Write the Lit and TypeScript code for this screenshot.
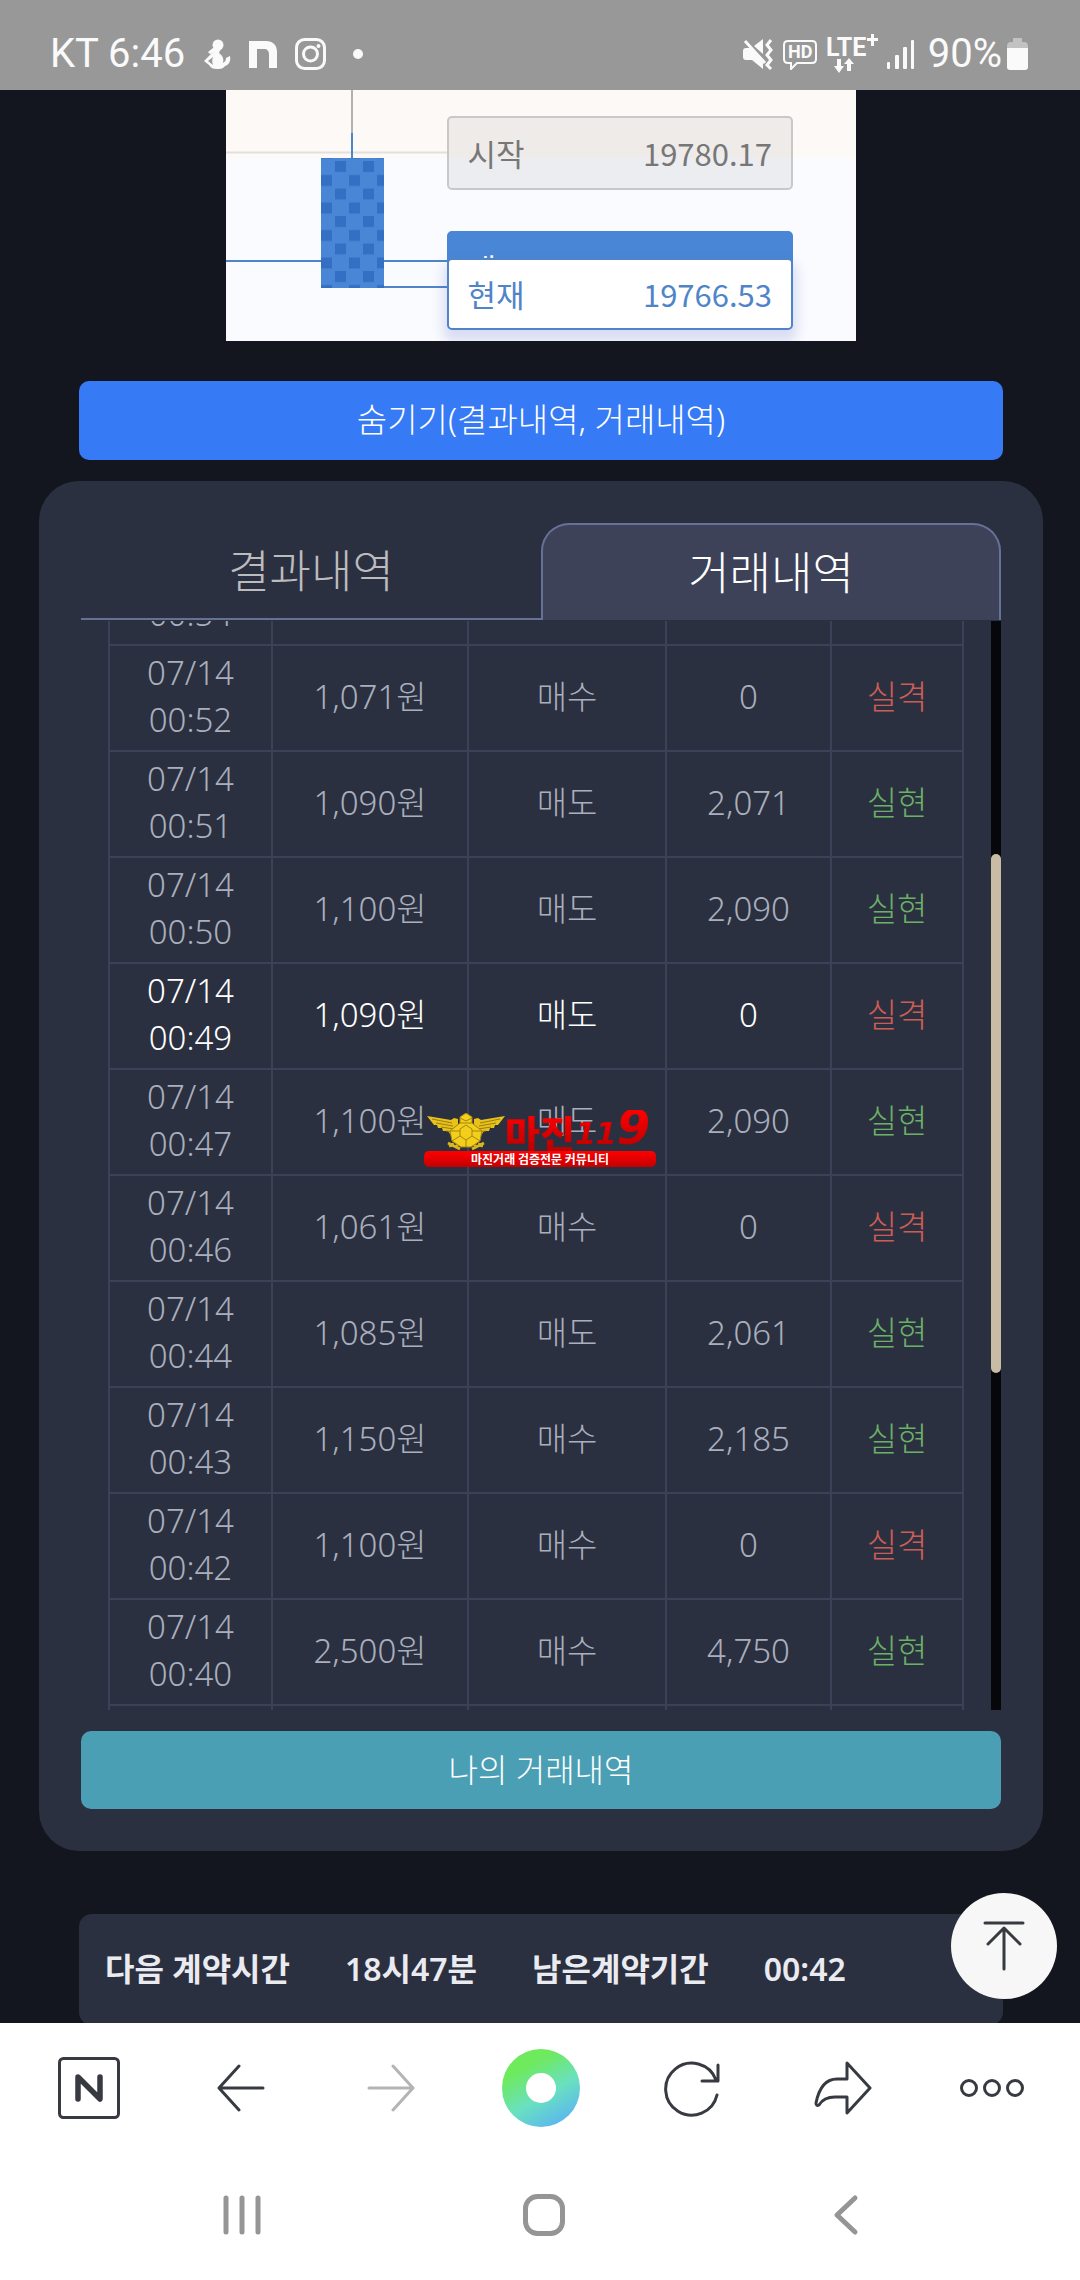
import { LitElement, html, css, svg } from "lit";
import { customElement, state } from "lit/decorators.js";
import { classMap } from "lit/directives/class-map.js";

interface Trade {
  time: string;
  amount?: string;
  side?: string;
  payout?: string;
  win?: boolean;
  strong?: boolean;
}

const TRADES: Trade[] = [
  { time: "00:54" },
  { time: "00:52", amount: "1,071원", side: "매수", payout: "0", win: false },
  { time: "00:51", amount: "1,090원", side: "매도", payout: "2,071", win: true },
  { time: "00:50", amount: "1,100원", side: "매도", payout: "2,090", win: true },
  { time: "00:49", amount: "1,090원", side: "매도", payout: "0", win: false, strong: true },
  { time: "00:47", amount: "1,100원", side: "매도", payout: "2,090", win: true },
  { time: "00:46", amount: "1,061원", side: "매수", payout: "0", win: false },
  { time: "00:44", amount: "1,085원", side: "매도", payout: "2,061", win: true },
  { time: "00:43", amount: "1,150원", side: "매수", payout: "2,185", win: true },
  { time: "00:42", amount: "1,100원", side: "매수", payout: "0", win: false },
  { time: "00:40", amount: "2,500원", side: "매수", payout: "4,750", win: true },
];

@customElement("status-bar")
export class StatusBar extends LitElement {
  static styles = css`
    :host { display: block; }
    .bar {
      display: flex;
      justify-content: space-between;
      align-items: center;
      height: 90px;
      padding: 18px 51px 0 50px;
      box-sizing: border-box;
      background: #989898;
      color: #fafafa;
      font: 400 40px/44px Roboto, "Noto Sans", sans-serif;
    }
    .side { display: flex; align-items: center; }
    .left svg { margin-left: 18px; }
    .right { gap: 8px; }
    svg { display: block; fill: #fafafa; }
    .hd { font: 700 18px Roboto, sans-serif; }
    .lte { font: 700 25px Roboto, sans-serif; }
    .line { fill: none; stroke: #fafafa; }
    .level { display: flex; align-items: center; gap: 5px; padding-left: 4px; }
  `;

  render() {
    return html`
      <div class="bar">
        <div class="side left">
          <span>KT 6:46</span>
          <svg width="28" height="32" viewBox="0 0 28 32">
            <circle cx="15" cy="7" r="5.5" />
            <path d="M12 10h6l-2 5c4 3 5 6 4 10 2-1 3-3 3-5l4-2c1 5-1 9-5 10-2 3-5 3-8 3-4 0-6-1-8-4L1 23l8-8 3-1-5 2-2-2 5-4zM5 23l5 4c-1-3-1-5 0-8z" fill-rule="evenodd" />
          </svg>
          <svg width="28" height="32" viewBox="0 0 28 32">
            <path d="M0 3h17c7 0 11 4 11 11v16h-8V16c0-3-2-5-5-5H8v19H0z" />
          </svg>
          <svg width="32" height="32" viewBox="0 0 32 32">
            <g class="line" stroke-width="3">
              <rect x="1.5" y="1.5" width="28" height="29" rx="8" />
              <circle cx="15.500" cy="16" r="7" />
            </g>
            <circle cx="23.500" cy="8" r="2" />
          </svg>
          <svg width="36" height="32" viewBox="0 0 36 32"><circle cx="13" cy="16" r="5" /></svg>
        </div>
        <div class="side right">
          <svg width="32" height="32" viewBox="0 0 32 32">
            <path d="M1 13q0-3 3-3h5L21 22v9L10 22H4q-3 0-3-3zM12 8l9-7v15z" />
            <path class="line" d="M3 3l20 22M29 2l-4 5 4 5-4 5 4 5-4 5 4 4" stroke-width="3" />
          </svg>
          <svg width="36" height="32" viewBox="0 0 36 32">
            <path class="line" d="M6 3h24q4 0 4 4v14q0 4-4 4H15l-6 6v-6H6q-4 0-4-4V7q0-4 4-4z" stroke-width="2" />
            <text class="hd" x="6" y="20">HD</text>
          </svg>
          <svg width="52" height="40" viewBox="0 0 52 40">
            <text class="lte" x="0" y="22">LTE</text>
            <path d="M45 0h3v4h4v3h-4v5h-3V7h-4V4h4z" />
            <path d="M11 25h4v7h3l-5 7-5-7h3zM21 37h4v-7h3l-5-6-5 6h3z" />
          </svg>
          <svg width="30" height="32" viewBox="0 0 30 32">
            <rect x="1" y="24" width="3" height="7" rx="1" />
            <rect x="9" y="17" width="4" height="14" rx="1" />
            <rect x="17" y="9" width="4" height="22" rx="1" />
            <rect x="25" y="2" width="3" height="29" rx="1" />
          </svg>
          <span class="level">
            <span>90%</span>
            <svg width="22" height="34" viewBox="0 0 22 34">
              <path d="M6 1h9v4h2q4 0 4 4v3H0V9q0-4 4-4h2z" fill="#c2c2c2" />
              <path d="M0 11h21v19q0 3-3 3H3q-3 0-3-3z" />
            </svg>
          </span>
        </div>
      </div>
    `;
  }
}

@customElement("price-chart")
export class PriceChart extends LitElement {
  static styles = css`
    :host { display: block; }
    .chart {
      position: relative;
      height: 251px;
      overflow: hidden;
      background: linear-gradient(#fdf9f7 68px, #fafbff 68px);
      font: 400 31px/42px "Noto Sans CJK KR", sans-serif;
    }
    svg { display: block; width: 100%; height: 251px; }
    .tag {
      position: absolute;
      left: 35%;
      right: 10%;
      box-sizing: border-box;
      display: flex;
      justify-content: space-between;
      align-items: center;
      height: 74px;
      padding: 0 19px;
      border: 2px solid #c8c8c8;
      border-radius: 5px;
      color: #777;
    }
    .open { top: 26px; background: rgba(80, 75, 75, 0.08); }
    .sell { top: 141px; background: #4a86d6; border-color: #4a86d6; color: #fff; }
    .now {
      top: 168px;
      height: 72px;
      background: #fff;
      border-color: #4f85c8;
      color: #4f85c8;
      box-shadow: 0 8px 12px 4px rgba(90, 105, 190, 0.2);
    }
  `;

  render() {
    return html`
      <div class="chart">
        <svg viewBox="0 0 630 251" preserveAspectRatio="none" role="img" aria-label="19766.53">
          <defs>
            <pattern id="weave" x="95" y="71" width="28" height="27.500" patternUnits="userSpaceOnUse">
              <rect width="28" height="28" fill="#4a86d6" />
              <rect x="14" y="0" width="11" height="11" fill="#356fc4" />
              <rect x="0" y="14" width="11" height="11" fill="#356fc4" />
            </pattern>
          </defs>
          <path d="M0 62.500H221" stroke="#e2dfde" stroke-width="2" />
          <path d="M126 0V43" stroke="#b3b1b0" stroke-width="2" />
          <path d="M126 43V69" stroke="#4a86c8" stroke-width="2" />
          <path d="M0 171H221M158 197H221" stroke="#4f85c8" stroke-width="2" />
          <rect x="95" y="68" width="63" height="130" fill="#4a86d6" />
          <rect x="95" y="68" width="63" height="130" fill="url(#weave)" />
        </svg>
        <div class="tag open"><span>시작</span><span>19780.17</span></div>
        <div class="tag sell"><span>매도</span></div>
        <div class="tag now"><span>현재</span><span>19766.53</span></div>
      </div>
    `;
  }
}

@customElement("trade-table")
export class TradeTable extends LitElement {
  static styles = css`
    :host { display: flex; min-height: 0; }
    .view { flex: 1; overflow: hidden; padding: 0 27px; }
    table {
      width: 100%;
      margin-top: -83px;
      border-collapse: collapse;
      table-layout: fixed;
      color: #a9afbc;
      font: 300 33px/47px "Noto Sans", "Noto Sans CJK KR", sans-serif;
    }
    .date { width: 163px; }
    .amount { width: 196px; }
    .side { width: 198px; }
    .payout { width: 165px; }
    td {
      height: 94px;
      padding: 3px 0 7px;
      border: 2px solid #3c4158;
      text-align: center;
    }
    .strong { color: #fff; }
    .win { color: #6ab066; }
    .lose { color: #cc5d54; }
    .track { width: 10px; background: #05070b; display: grid; grid-template-rows: 233fr 519fr 337fr; }
    .thumb { grid-row: 2; border-radius: 5px; background: #c8bca5; }
  `;

  render() {
    return html`
      <div class="view">
        <table>
          <colgroup>
            <col class="date" /><col class="amount" /><col class="side" /><col class="payout" /><col />
          </colgroup>
          <tbody>
            ${TRADES.map(
              (t) => html`
                <tr class=${classMap({ strong: !!t.strong })}>
                  <td>07/14<br />${t.time}</td>
                  <td>${t.amount}</td>
                  <td>${t.side}</td>
                  <td>${t.payout}</td>
                  <td class=${t.win ? "win" : "lose"}>
                    ${t.win === undefined ? "" : t.win ? "실현" : "실격"}
                  </td>
                </tr>
              `
            )}
            <tr><td></td><td></td><td></td><td></td><td></td></tr>
          </tbody>
        </table>
      </div>
      <div class="track"><div class="thumb"></div></div>
    `;
  }
}

@customElement("brand-mark")
export class BrandMark extends LitElement {
  static styles = css`
    :host { display: block; width: 232px; }
    .top { display: flex; align-items: flex-end; height: 38px; padding-left: 3px; white-space: nowrap; }
    svg { display: block; flex: none; }
    .name, .num {
      flex: none;
      color: transparent;
      background: linear-gradient(#ff0000, #b80000);
      -webkit-background-clip: text;
      background-clip: text;
    }
    .name { font: 900 38px/38px "Noto Sans CJK KR", sans-serif; }
    .num { font: italic 700 30px/34px "DejaVu Sans", sans-serif; padding-right: 6px; }
    .nine { font-size: 48px; }
    .strip {
      height: 16px;
      border-radius: 5px;
      background: linear-gradient(#ff0000, #c40000);
      color: #fff;
      text-align: center;
      font: 700 12px/16px "Noto Sans CJK KR", sans-serif;
    }
  `;

  render() {
    const wing = svg`
      <path d="M0 3L24 7l3-2 4 1v14l-8 1-2-3h-5l-1-3h-4l-1-3H7z" fill="#e8c21a" />
      <path d="M5 6l20 4M9 10l17 3M14 14l13 2M19 18l10 1" fill="none" stroke="#9a7d10" />`;
    return html`
      <div class="top">
        <svg width="78" height="38" viewBox="0 0 78 38">
          ${wing}
          <g transform="translate(78 0) scale(-1 1)">${wing}</g>
          <path d="M21 30l12 6M57 30l-12 6M22 33l5-2M56 33l-5-2M28 34l6-4M50 34l-6-4" stroke="#d9b51c" stroke-width="3" />
          <path d="M33 4l6-4 6 4v6l10 8-2 10-9 6H34l-9-6-2-10 10-8z" fill="#f3cf1b" stroke="#a38512" />
          <path d="M39 12l6 4v7l-6 4-6-4v-7zM33 5l6 3 6-3M33 10h12M23 18l10 0M55 18H45M25 28l8-5M53 28l-8-5M39 27v7" fill="none" stroke="#a38512" />
        </svg>
        <span class="name">마진</span><span class="num">11<span class="nine">9</span></span>
      </div>
      <div class="strip">마진거래 검증전문 커뮤니티</div>
    `;
  }
}

@customElement("app-root")
export class AppRoot extends LitElement {
  @state() private tab = 1;

  static styles = css`
    :host { display: block; }
    .app {
      position: relative;
      display: flex;
      flex-direction: column;
      height: 100vh;
      background: #13161e;
      font: 300 32px/47px "Noto Sans", "Noto Sans CJK KR", sans-serif;
    }
    button {
      border: 0;
      margin: 0;
      padding: 0;
      background: none;
      color: #fff;
      font: inherit;
      cursor: pointer;
    }
    svg { display: block; }
    main {
      flex: 1;
      min-height: 0;
      overflow: hidden;
      display: flex;
      flex-direction: column;
      padding: 0 37px 0 39px;
    }
    .chart { margin: 0 187px; flex: none; }
    .wide { flex: none; height: 79px; border-radius: 10px; padding-bottom: 2px; }
    .hide { margin: 40px 40px 21px; background: #367af6; font-size: 33px; }
    .panel {
      flex: 1;
      min-height: 0;
      display: flex;
      flex-direction: column;
      padding: 42px;
      border-radius: 40px;
      background: #2b3040;
    }
    .tabs { display: grid; grid-template-columns: 1fr 1fr; height: 97px; margin-bottom: 1px; flex: none; }
    .tab {
      font-size: 45px;
      line-height: 60px;
      color: #bcbcbe;
      border-bottom: 2px solid #667196;
    }
    .tab.active {
      color: #fff;
      background: #3d4259;
      border: 2px solid #667196;
      border-bottom: 0;
      border-radius: 28px 28px 0 0;
    }
    .list { flex: 1; }
    .mine { height: 78px; margin-top: 21px; background: #4b9fb5; }
    .next {
      flex: none;
      display: flex;
      gap: 55px;
      margin: 63px 40px -2px;
      padding: 31px 26px 33px;
      border-radius: 13px;
      background: #2b3040;
      color: #eaebf0;
      font-weight: 600;
    }
    .fab {
      position: absolute;
      right: 23px;
      bottom: 281px;
      width: 106px;
      height: 106px;
      border-radius: 50%;
      background: #f7f7f7;
    }
    .mark { position: absolute; top: 50%; left: 50%; transform: translate(-50%, -50%); }
    .tools {
      flex: none;
      display: grid;
      grid-template-columns: repeat(7, 1fr);
      height: 132px;
      box-sizing: border-box;
      padding: 0 12px 3px 14px;
      background: #fff;
    }
    .system {
      flex: none;
      display: grid;
      grid-template-columns: repeat(3, 1fr);
      height: 125px;
      padding: 0 83px 5px 91px;
      box-sizing: border-box;
      background: #fff;
    }
    .tools button, .system button { display: grid; place-items: center; }
    .ink { fill: none; stroke: #373a40; stroke-width: 3; stroke-linecap: round; stroke-linejoin: round; }
    .dim { stroke: #b4b4b4; }
    .sys { fill: none; stroke: #959595; stroke-width: 5; stroke-linecap: round; stroke-linejoin: round; }
    .ring { width: 78px; height: 78px; border-radius: 50%; background: linear-gradient(150deg, #6eea5c 25%, #6ae0c0 58%, #5bb8ee 88%); display: grid; place-items: center; }
    .hole { width: 30px; height: 30px; border-radius: 50%; background: #fff; }
  `;

  render() {
    return html`
      <div class="app">
        <status-bar></status-bar>
        <main>
          <price-chart class="chart"></price-chart>
          <button class="wide hide">숨기기(결과내역, 거래내역)</button>
          <section class="panel">
            <div class="tabs" role="tablist">
              ${["결과내역", "거래내역"].map(
                (label, i) => html`
                  <button
                    role="tab"
                    aria-selected=${this.tab === i}
                    class=${classMap({ tab: true, active: this.tab === i })}
                    @click=${() => (this.tab = i)}
                  >${label}</button>
                `
              )}
            </div>
            <trade-table class="list"></trade-table>
            <button class="wide mine">나의 거래내역</button>
          </section>
          <section class="next">
            <span>다음 계약시간</span><span>18시47분</span><span>남은계약기간</span><span>00:42</span>
          </section>
        </main>
        <nav class="tools">
          <button aria-label="N">
            <svg class="ink" width="62" height="62" viewBox="0 0 62 62">
              <rect x="1.500" y="1.500" width="59" height="59" rx="4" />
              <path d="M20 42V20L42 42V20" stroke-width="5.500" />
            </svg>
          </button>
          <button aria-label="뒤로">
            <svg class="ink" width="50" height="50" viewBox="0 0 50 50"><path d="M48 25H4M24 3L4 25l20 22" /></svg>
          </button>
          <button aria-label="앞으로">
            <svg class="ink dim" width="50" height="50" viewBox="0 0 50 50"><path d="M4 25h44M28 3l20 22-20 22" /></svg>
          </button>
          <button aria-label="홈"><span class="ring"><span class="hole"></span></span></button>
          <button aria-label="새로고침">
            <svg class="ink" width="60" height="60" viewBox="0 0 60 60">
              <path d="M55 37A26 26 0 1 1 54 22M56 7V23H40" />
            </svg>
          </button>
          <button aria-label="공유">
            <svg class="ink" width="60" height="60" viewBox="0 0 60 60">
              <path d="M35 5l23 25-23 25V39H23c-8 0-13 3-16 8-2 1-3 0-3-2C7 30 14 21 25 21h10z" />
            </svg>
          </button>
          <button aria-label="더보기">
            <svg class="ink" width="66" height="30" viewBox="0 0 66 30">
              <circle cx="9" cy="15" r="7.500" /><circle cx="32" cy="15" r="7.500" /><circle cx="55" cy="15" r="7.500" />
            </svg>
          </button>
        </nav>
        <nav class="system">
          <button aria-label="최근 앱">
            <svg class="sys" width="50" height="50" viewBox="0 0 50 50"><path d="M9 8v34M25 8v34M41 8v34" /></svg>
          </button>
          <button aria-label="홈 화면">
            <svg class="sys" width="50" height="50" viewBox="0 0 50 50"><rect x="6.500" y="6.500" width="37" height="37" rx="12" /></svg>
          </button>
          <button aria-label="이전">
            <svg class="sys" width="50" height="50" viewBox="0 0 50 50"><path d="M34 8L16 25l18 17" /></svg>
          </button>
        </nav>
        <button class="fab" aria-label="맨 위로">
          <svg class="ink" width="106" height="106" viewBox="0 0 106 106">
            <path d="M34 30h38M53 76V35M37 51l16-16 16 16" />
          </svg>
        </button>
        <brand-mark class="mark"></brand-mark>
      </div>
    `;
  }
}
